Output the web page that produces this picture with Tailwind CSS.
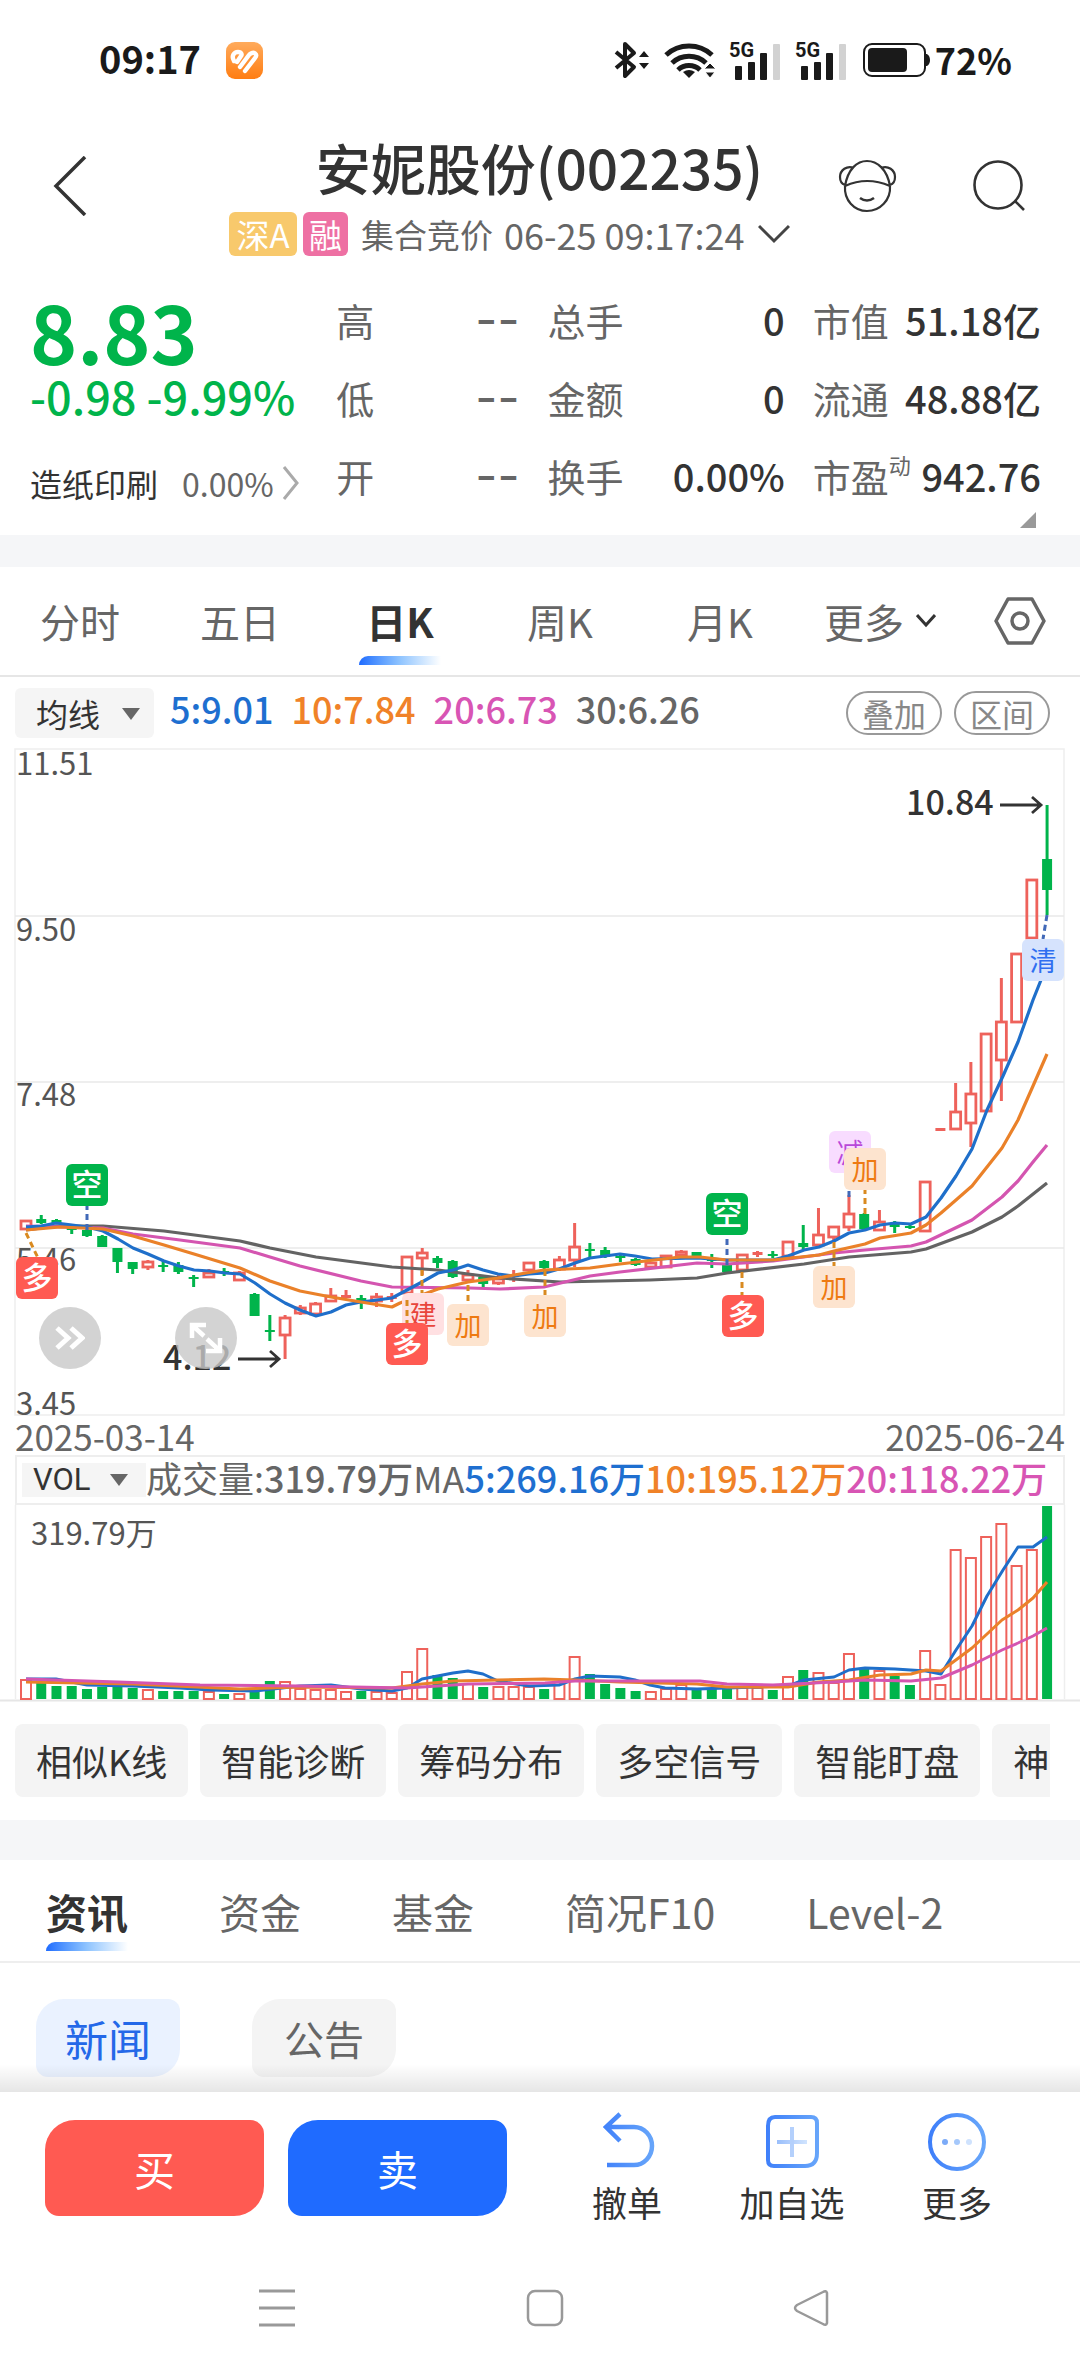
<!DOCTYPE html>
<html lang="zh-CN">
<head>
<meta charset="utf-8">
<meta name="viewport" content="width=device-width, initial-scale=1">
<title>安妮股份(002235)</title>
<script src="https://cdn.jsdelivr.net/npm/@tailwindcss/browser@4"></script>
</head>
<body class="bg-white text-[#333] font-['Noto_Sans_CJK_SC',sans-serif] overflow-x-hidden">

<!-- status bar -->
<div class="flex h-[120px] items-center justify-between pl-[99px] pr-[68px] text-[#1a1a1a]">
  <div class="flex items-center gap-[25px]">
    <span class="pb-1 text-[38px] leading-none font-bold">09:17</span>
    <svg class="h-[37px] w-[37px]" viewBox="0 0 37 37"><defs><linearGradient id="app" x1="0" y1="0" x2="0" y2="1"><stop offset="0" stop-color="#ffab5c"/><stop offset="1" stop-color="#ff7d12"/></linearGradient></defs><rect width="37" height="37" rx="9" fill="url(#app)"/><g fill="none" stroke="#fff" stroke-width="4.4" stroke-linecap="round" stroke-linejoin="round"><path d="M8 19c-3-5 0-9 4-9s4 3 3 4l-4 6M14 25l9-12M19 29l10-13c3-4-1-7-5-4"/></g></svg>
  </div>
  <div class="flex items-center">
    <svg class="h-[38px] w-[36px]" viewBox="0 0 36 38" fill="none" stroke="#1a1a1a" stroke-width="4" stroke-linejoin="round"><path d="M2 11l18 15-9 9V3l9 9L2 27"/><path d="M30 10l5 6H25zM30 28l5-6H25z" fill="#1a1a1a" stroke="none"/></svg>
    <svg class="ml-[14px] h-[38px] w-[52px]" viewBox="0 0 52 38" fill="none" stroke="#1a1a1a" stroke-width="5"><path d="M2 14a34 34 0 0 1 46 0M8 22a25 25 0 0 1 34 0M14 29a16 16 0 0 1 22 0"/><path d="M19 31q6-4 12 0l-6 6z" fill="#1a1a1a" stroke="none"/><path d="M46 22l6 6H40zM46 37l5-6H41z" fill="#1a1a1a" stroke="#fff" stroke-width="1"/></svg>
    <svg class="ml-[13px] h-[44px] w-[52px] pb-[2px]" viewBox="0 -4 52 42" fill="#1a1a1a"><text x="0" y="15" font-size="20" font-weight="700" font-family="Roboto, sans-serif">5G</text><rect x="6" y="24" width="7" height="14" rx="1"/><rect x="19" y="20" width="7" height="18" rx="1"/><rect x="31" y="11" width="7" height="27" rx="1"/><rect x="44" y="2" width="7" height="36" rx="1" fill="#d2d2d2"/></svg>
    <svg class="ml-[14px] h-[44px] w-[52px] pb-[2px]" viewBox="0 -4 52 42" fill="#1a1a1a"><text x="0" y="15" font-size="20" font-weight="700" font-family="Roboto, sans-serif">5G</text><rect x="6" y="24" width="7" height="14" rx="1"/><rect x="19" y="20" width="7" height="18" rx="1"/><rect x="31" y="11" width="7" height="27" rx="1"/><rect x="44" y="2" width="7" height="36" rx="1" fill="#d2d2d2"/></svg>
    <svg class="ml-[16px] h-[34px] w-[67px]" viewBox="0 0 67 34"><rect x="1" y="1" width="61" height="32" rx="8" fill="none" stroke="#1a1a1a" stroke-width="2"/><rect x="5" y="5" width="39" height="24" rx="4" fill="#1a1a1a"/><path d="M62 11h2q3 2 3 6t-3 6h-2z" fill="#1a1a1a"/></svg>
    <span class="ml-[5px] pb-[2px] text-[36px] leading-none font-bold">72%</span>
  </div>
</div>

<!-- title -->
<header class="flex items-start pt-4 pb-[27px]">
  <div class="w-[229px] pl-[50px]">
    <button aria-label="返回" class="flex h-[100px] w-[40px] items-center"><svg class="h-[60px] w-[40px]" viewBox="0 0 40 60" fill="none" stroke="#333" stroke-width="3.5"><path d="M35 1L6 30l29 29"/></svg></button>
  </div>
  <div class="flex-1">
    <h1 class="h-[66px] pl-[60px] text-center text-[55px] leading-[60px] font-medium whitespace-nowrap">安妮股份(002235)</h1>
    <div class="mt-[10px] flex h-[44px] items-center text-[33px] leading-[44px] whitespace-nowrap text-[#666]">
      <span class="h-[44px] w-[68px] rounded-[6px] bg-[#f8c96c] text-center text-white">深A</span>
      <span class="ml-[6px] h-[44px] w-[45px] rounded-[6px] bg-[#ee70a3] text-center text-white">融</span>
      <span class="ml-[13px]">集合竞价</span>
      <span class="ml-[11px] text-[36px]">06-25 09:17:24</span>
      <svg class="ml-auto h-[20px] w-[32px]" viewBox="0 0 32 20" fill="none" stroke="#444" stroke-width="3"><path d="M1 2l15 15L31 2"/></svg>
    </div>
  </div>
  <div class="flex w-[290px] items-center pl-12">
    <button aria-label="助手" class="flex h-[100px] w-[59px] items-center"><svg class="h-[54px] w-[59px]" viewBox="0 0 59 54" fill="none" stroke="#333" stroke-width="2.2"><path d="M7 27C10 10 19 2 29 2s20 8 23 25M7 27q22-10 45 0M7 27c-1 14 9 25 22 25s24-11 23-25M16 9C9 6 2 11 2 18c0 4 2 7 5 8M43 9c7-3 14 2 14 9 0 4-2 7-5 8"/><path d="M22 39q7 5 14 0" stroke-width="2.6"/></svg></button>
    <button aria-label="搜索" class="ml-[76px] flex h-[100px] w-[52px] items-center"><svg class="h-[52px] w-[52px]" viewBox="0 0 52 52" fill="none" stroke="#333" stroke-width="2.6"><circle cx="25" cy="25" r="23.5"/><path d="M42 41l9 9"/></svg></button>
  </div>
</header>

<!-- quote summary -->
<section class="relative grid grid-cols-[278fr_183fr_237fr_228fr] gap-x-7 pr-[39px] pb-5 pl-[30px] text-[38px] leading-[78px] whitespace-nowrap">
  <div class="text-[#00b44b]">
    <div class="text-[80px] leading-[94px] font-bold">8.83</div>
    <div class="text-[45px] leading-[38px] font-medium">-0.98 -9.99%</div>
    <a href="#sector" class="mt-[36px] flex h-[64px] items-center text-[32px] leading-[64px] text-[#333]">造纸印刷<span class="ml-[24px] text-[#666]">0.00%</span><svg class="ml-[8px] h-[34px] w-[18px]" viewBox="0 0 18 34" fill="none" stroke="#aaa" stroke-width="3"><path d="M2 1l13 16L2 33"/></svg></a>
  </div>
  <dl class="-mt-[2px] text-[#666]">
    <div class="flex justify-between"><dt>高</dt><dd class="font-['Inter'] text-[48px]">--</dd></div>
    <div class="flex justify-between"><dt>低</dt><dd class="font-['Inter'] text-[48px]">--</dd></div>
    <div class="flex justify-between"><dt>开</dt><dd class="font-['Inter'] text-[48px]">--</dd></div>
  </dl>
  <dl class="-mt-[2px]">
    <div class="flex justify-between"><dt class="text-[#666]">总手</dt><dd class="font-medium">0</dd></div>
    <div class="flex justify-between"><dt class="text-[#666]">金额</dt><dd class="font-medium">0</dd></div>
    <div class="flex justify-between"><dt class="text-[#666]">换手</dt><dd class="font-medium">0.00%</dd></div>
  </dl>
  <dl class="-mt-[2px]">
    <div class="flex justify-between"><dt class="text-[#666]">市值</dt><dd class="font-medium">51.18亿</dd></div>
    <div class="flex justify-between"><dt class="text-[#666]">流通</dt><dd class="font-medium">48.88亿</dd></div>
    <div class="flex justify-between"><dt class="flex text-[#666]">市盈<span class="text-[22px] leading-[54px]">动</span></dt><dd class="font-medium">942.76</dd></div>
  </dl>
  <svg class="absolute right-[44px] bottom-[7px] h-[16px] w-[16px]" viewBox="0 0 16 16"><path d="M16 0v16H0z" fill="#999"/></svg>
</section>

<div class="h-8 bg-[#f5f6f8]"></div>

<!-- period tabs -->
<nav class="grid h-[110px] grid-cols-[repeat(6,4fr)_3fr] border-b-2 border-[#e6e6e6] text-[40px] leading-[108px] text-[#666]">
  <a href="#m" class="text-center">分时</a>
  <a href="#d5" class="text-center">五日</a>
  <a href="#dk" class="relative text-center font-bold text-[#333]">日K<span class="absolute bottom-[10px] left-[39px] h-[9px] w-[82px] rounded-tl-[9px] bg-linear-to-r from-[#1f6bff] via-[#8fc4ff] to-white"></span></a>
  <a href="#wk" class="text-center">周K</a>
  <a href="#mk" class="text-center">月K</a>
  <button class="flex items-center justify-center gap-3 leading-[108px]">更多<svg class="h-[14px] w-[20px]" viewBox="0 0 20 14" fill="none" stroke="#333" stroke-width="3"><path d="M1 1l9 10 9-10"/></svg></button>
  <button aria-label="设置" class="flex items-center justify-center"><svg class="h-[48px] w-[52px]" viewBox="0 0 52 48" fill="none" stroke="#666" stroke-width="3.5" stroke-linejoin="round"><path d="M14 2h24l12 22-12 22H14L2 24z"/><circle cx="26" cy="24" r="8"/></svg></button>
</nav>

<!-- moving averages -->
<div class="flex h-[71px] items-center pr-[30px] pl-[15px] text-[36px] leading-[44px] font-medium whitespace-nowrap">
  <label class="relative block h-[50px] w-[139px] rounded-[6px] bg-[#f5f5f5] text-[32px]">
    <select aria-label="指标" class="block h-[50px] w-full appearance-none bg-transparent pl-[21px] leading-[50px] font-normal text-[#333]"><option>均线</option></select>
    <svg class="absolute top-[20px] right-[14px] h-[12px] w-[18px]" viewBox="0 0 18 12"><path d="M0 0h18L9 12z" fill="#666"/></svg>
  </label>
  <div class="flex gap-[18px] pb-[10px] pl-[16px]">
    <span class="text-[#1e6fd0]">5:9.01</span>
    <span class="text-[#f08228]">10:7.84</span>
    <span class="text-[#d855b4]">20:6.73</span>
    <span class="text-[#666]">30:6.26</span>
  </div>
  <button class="ml-auto h-[44px] w-[96px] rounded-full border-2 border-[#999] text-[32px] leading-[40px] font-normal text-[#888]">叠加</button>
  <button class="ml-[12px] h-[44px] w-[96px] rounded-full border-2 border-[#999] text-[32px] leading-[40px] font-normal text-[#888]">区间</button>
</div>

<!-- candlestick chart -->
<div class="relative">
  <svg id="price" class="block h-auto w-full overflow-visible" viewBox="0 748 1080 669"></svg>
  <button aria-label="展开" class="absolute bottom-[48px] left-[3.6%] flex h-[62px] w-[62px] items-center justify-center rounded-full bg-[#c8c8c8]/80"><svg class="h-[24px] w-[30px]" viewBox="0 0 30 24" fill="none" stroke="#fff" stroke-width="5"><path d="M2 2l11 10L2 22M16 2l11 10-11 10"/></svg></button>
  <button aria-label="全屏" class="absolute bottom-[48px] left-[16.2%] flex h-[62px] w-[62px] items-center justify-center rounded-full bg-[#c8c8c8]/80"><svg class="h-[32px] w-[34px]" viewBox="0 0 34 32" fill="none" stroke="#fff" stroke-width="4.5"><path d="M3 16V3h14M4 4l11 10M31 16v13H17M30 28L18 17"/></svg></button>
</div>
<div class="mx-[15px] flex h-[40px] justify-between border-b-2 border-[#eee] text-[35px] leading-[38px] text-[#666]"><span>2025-03-14</span><span>2025-06-24</span></div>

<!-- volume -->
<div class="mx-[15px] flex h-[48px] items-center border-x-2 border-b-2 border-[#eee] pl-[5px] text-[36px] leading-[40px] whitespace-nowrap text-[#666]">
  <label class="relative block h-[34px] w-[124px] shrink-0 bg-[#f5f5f5] font-['Roboto'] text-[31px]">
    <select aria-label="副图指标" class="block h-[34px] w-full appearance-none bg-transparent pl-[11px] leading-[34px] text-[#333]"><option>VOL</option></select>
    <svg class="absolute top-[11px] right-[18px] h-[12px] w-[18px]" viewBox="0 0 18 12"><path d="M0 0h18L9 12z" fill="#666"/></svg>
  </label>
  <div class="flex pb-[6px] font-medium"><span class="font-normal">成交量:</span><span>319.79万</span><span class="font-normal">MA</span><span class="text-[#1e6fd0]">5:269.16万</span><span class="text-[#f08228]">10:195.12万</span><span class="text-[#d855b4]">20:118.22万</span></div>
</div>
<svg id="volume" class="block h-auto w-full" viewBox="0 1505 1080 197"></svg>

<!-- tool chips -->
<div class="mr-[30px] ml-[15px] flex gap-[12px] overflow-hidden pt-[22px] pb-[23px] text-[36px] leading-[73px] whitespace-nowrap">
  <button class="shrink-0 rounded-[8px] bg-[#f4f4f4] px-[21px]">相似K线</button>
  <button class="shrink-0 rounded-[8px] bg-[#f4f4f4] px-[21px]">智能诊断</button>
  <button class="shrink-0 rounded-[8px] bg-[#f4f4f4] px-[21px]">筹码分布</button>
  <button class="shrink-0 rounded-[8px] bg-[#f4f4f4] px-[21px]">多空信号</button>
  <button class="shrink-0 rounded-[8px] bg-[#f4f4f4] px-[21px]">智能盯盘</button>
  <button class="shrink-0 rounded-[8px] bg-[#f4f4f4] px-[21px]">神</button>
</div>

<div class="h-10 bg-[#f5f6f8]"></div>

<!-- content tabs -->
<nav class="flex h-[103px] gap-[91px] border-b-2 border-[#eee] pl-[46px] text-[41px] leading-[102px] whitespace-nowrap text-[#666]">
  <a href="#news" class="relative font-bold text-[#333]">资讯<span class="absolute bottom-[10px] left-0 h-[9px] w-[82px] rounded-tl-[9px] bg-linear-to-r from-[#1f6bff] via-[#8fc4ff] to-white"></span></a>
  <a href="#money">资金</a>
  <a href="#fund">基金</a>
  <a href="#f10">简况F10</a>
  <a href="#l2">Level-2</a>
</nav>
<div class="relative flex h-[129px] gap-[72px] pt-[36px] pl-[36px] text-[43px] leading-[76px]">
  <button class="h-[78px] w-[144px] rounded-[12px] rounded-tl-[28px] rounded-br-[28px] bg-[#eaf2ff] text-[#2468e8]">新闻</button>
  <button class="h-[78px] w-[144px] rounded-[12px] rounded-tl-[28px] rounded-br-[28px] bg-[#f4f4f4] text-[40px] text-[#666]">公告</button>
  <div class="pointer-events-none absolute inset-x-0 bottom-0 h-[28px] bg-linear-to-b from-black/0 to-black/10"></div>
</div>

<!-- trade bar -->
<footer class="flex items-start gap-[24px] pt-[28px] pl-[45px] text-[35px] leading-[48px]">
  <button class="h-[96px] w-[219px] rounded-[14px] rounded-tl-[30px] rounded-br-[30px] bg-[#ff5a52] text-[41px] text-white">买</button>
  <button class="h-[96px] w-[219px] rounded-[14px] rounded-tl-[30px] rounded-br-[30px] bg-[#1f6bff] text-[41px] text-white">卖</button>
  <div class="-mt-2 flex flex-1 justify-between pr-[87px] pl-[60px]">
    <button class="flex w-[72px] flex-col items-center gap-[6px]">
      <svg class="h-[60px] w-[60px]" viewBox="0 0 60 60" fill="none" stroke="url(#ic)" stroke-width="4.5"><defs><linearGradient id="ic" gradientUnits="userSpaceOnUse" x1="0" y1="0" x2="60" y2="0"><stop offset="0" stop-color="#3c7dfa"/><stop offset="1" stop-color="#6aa8fa"/></linearGradient><linearGradient id="pale" gradientUnits="userSpaceOnUse" x1="14" y1="0" x2="46" y2="0"><stop offset="0" stop-color="#98bdfb"/><stop offset="1" stop-color="#d2e5fe"/></linearGradient></defs><path d="M23 2L9 15l14 14M9 15h28a18 19 0 0 1 0 38H10"/></svg>撤单</button>
    <button class="flex w-[108px] flex-col items-center gap-[6px]">
      <svg class="h-[60px] w-[60px]" viewBox="0 0 60 60" fill="none" stroke="url(#ic)" stroke-width="4"><path d="M13 5h36q6 0 6 6v30q0 13-12 13H12q-6 0-6-6V14q0-9 7-9z"/><rect x="15" y="28" width="30" height="4" fill="url(#pale)" stroke="none"/><rect x="28" y="15" width="4" height="30" fill="#b4d0fc" stroke="none"/></svg>加自选</button>
    <button class="flex w-[72px] flex-col items-center gap-[6px]">
      <svg class="h-[60px] w-[60px]" viewBox="0 0 60 60"><circle cx="30" cy="30" r="27" fill="none" stroke="url(#ic)" stroke-width="4"/><circle cx="18" cy="30" r="3" fill="#7cabf8"/><circle cx="30" cy="30" r="3" fill="#a5c8fb"/><circle cx="42" cy="30" r="3" fill="#cfe2fd"/></svg>更多</button>
  </div>
</footer>

<!-- system navigation -->
<div class="flex justify-between pt-[63px] pr-[251px] pb-[48px] pl-[258px]">
  <button aria-label="最近任务"><svg class="h-[38px] w-[38px]" viewBox="0 0 38 38" stroke="#999" stroke-width="3"><path d="M1 2h36M1 19h36M1 36h36"/></svg></button>
  <button aria-label="主屏幕"><svg class="h-[38px] w-[38px]" viewBox="0 0 38 38" fill="none" stroke="#999" stroke-width="2.5"><rect x="2" y="2" width="34" height="34" rx="7"/></svg></button>
  <button aria-label="后退"><svg class="h-[38px] w-[36px]" viewBox="0 0 36 38" fill="none" stroke="#999" stroke-width="2.5" stroke-linejoin="round"><path d="M34 4v30q-1 3-4 1L4 22q-4-3 0-6L30 3q3-2 4 1z"/></svg></button>
</div>

<script>
const RED = '#ee625b', GREEN = '#00b44b', LINE = {blue:'#1f6fca', orange:'#ea8129', pink:'#d455b0', gray:'#636363'};
const STEP = 15.24, X0 = 26;
// kind, body top, body bottom, high, low, volume top
const days = [
['r',1221,1229,1221,1229,1680],['g',1219,1223,1215,1224,1683],['g',1220,1223,1219,1224,1686],['g',1228,1230,1226,1234,1686],['g',1230,1236,1228,1237,1689],
['g',1236,1247,1235,1247,1687],['g',1248,1262,1248,1273,1687],['g',1262,1269,1262,1274,1688],['r',1262,1267,1260,1270,1690],['g',1265,1267,1260,1272,1691],
['g',1265,1272,1262,1274,1691],['g',1277,1279,1275,1287,1691],['r',1273,1277,1269,1277,1692],['g',1271,1273,1268,1276,1694],['r',1273,1280,1271,1280,1694],
['g',1294,1316,1293,1316,1692],['g',1330,1332,1315,1341,1681],['r',1318,1335,1315,1359,1682],['r',1308,1313,1305,1315,1689],['r',1304,1314,1302,1315,1690],
['r',1296,1301,1288,1301,1690],['r',1296,1297,1290,1298,1692],['g',1298,1302,1295,1309,1691],['r',1297,1301,1293,1307,1692],['r',1297,1298,1293,1302,1693],
['r',1257,1293,1256,1293,1672],['r',1253,1258,1248,1275,1649],['g',1258,1263,1256,1268,1675],['g',1261,1277,1260,1278,1678],['r',1275,1280,1270,1280,1684],
['g',1277,1284,1276,1287,1687],['r',1279,1283,1275,1285,1687],['r',1275,1276,1270,1282,1687],['r',1263,1270,1262,1271,1687],['g',1261,1268,1260,1272,1689],
['r',1260,1269,1256,1271,1682],['r',1247,1260,1223,1267,1657],['g',1249,1251,1243,1257,1674],['g',1250,1257,1247,1258,1684],['g',1256,1258,1255,1262,1688],
['g',1259,1265,1258,1266,1691],['r',1263,1267,1262,1268,1692],['r',1256,1267,1255,1268,1689],['r',1252,1255,1250,1256,1685],['g',1252,1256,1252,1258,1689],
['g',1258,1261,1254,1268,1689],['g',1265,1272,1263,1272,1689],['r',1255,1270,1254,1271,1688],['r',1253,1254,1251,1257,1688],['g',1254,1256,1251,1258,1690],
['r',1242,1256,1241,1257,1677],['g',1243,1247,1225,1249,1670],['r',1235,1245,1208,1246,1673],['r',1227,1237,1226,1240,1683],['r',1214,1227,1195,1231,1654],
['g',1214,1229,1213,1230,1669],['r',1222,1230,1210,1230,1671],['g',1223,1227,1221,1233,1676],['g',1226,1228,1225,1229,1685],['r',1182,1231,1181,1231,1651],
['r',1129,1130,1129,1130,1685],['r',1112,1129,1083,1130,1550],['r',1094,1123,1062,1147,1558],['r',1034,1111,1033,1112,1537],['r',1022,1060,978,1101,1524],
['r',954,1022,953,1022,1566],['r',880,938,879,938,1550],['g',859,890,805,915,1506]];
const priceMA = {
gray:'26,1230 57,1226 103,1226 164,1231 240,1241 270,1248 316,1257 392,1267 438,1270 468,1274 500,1278 560,1282 650,1280 697,1278 727,1273 804,1264 849,1257 911,1252 926,1249 972,1232 1002,1217 1018,1206 1047,1183',
pink:'26,1226 103,1228 133,1234 180,1240 240,1248 270,1257 300,1266 361,1281 392,1287 470,1288 500,1289 544,1287 590,1276 620,1272 697,1263 727,1264 773,1261 834,1253 865,1250 911,1246 926,1242 972,1220 1002,1197 1018,1181 1033,1162 1047,1145',
blue:'26,1227 41,1226 56,1223 72,1225 87,1227 103,1231 118,1239 133,1248 148,1254 164,1261 179,1266 194,1270 210,1271 225,1273 240,1274 255,1283 270,1294 285,1303 300,1310 316,1316 331,1312 346,1305 361,1302 377,1300 392,1298 407,1290 422,1282 438,1273 453,1270 468,1265 483,1270 498,1274 514,1276 529,1274 545,1273 559,1269 575,1263 590,1258 620,1254 635,1256 652,1259 697,1258 727,1260 773,1260 788,1256 804,1250 819,1247 834,1241 849,1233 865,1230 880,1225 895,1223 911,1224 926,1217 941,1198 956,1176 972,1149 987,1110 1003,1076 1018,1042 1033,1000 1047,965',
orange:'26,1230 60,1227 103,1229 133,1236 164,1245 194,1254 240,1268 270,1281 300,1291 331,1297 361,1302 392,1307 400,1303 438,1289 468,1282 498,1278 514,1275 544,1270 590,1268 620,1264 680,1257 700,1257 727,1260 773,1260 819,1255 834,1251 865,1244 880,1238 911,1233 926,1225 941,1213 956,1200 972,1186 1002,1148 1018,1120 1033,1086 1047,1054'};
const volMA = {
blue:'26,1679 56,1679 87,1685 133,1686 180,1688 210,1690 255,1691 300,1686 331,1685 361,1689 392,1691 407,1688 422,1679 453,1673 468,1671 483,1674 498,1681 529,1686 559,1685 575,1679 590,1676 620,1677 635,1680 650,1685 665,1688 697,1689 727,1688 788,1686 804,1680 834,1677 849,1670 865,1668 895,1669 926,1671 941,1674 956,1650 972,1626 987,1596 1003,1570 1018,1547 1033,1547 1047,1537',
orange:'26,1682 133,1684 240,1689 300,1687 392,1688 422,1684 453,1681 544,1679 575,1680 620,1682 697,1684 727,1687 788,1687 819,1682 849,1680 880,1675 911,1674 926,1670 941,1671 972,1648 1002,1620 1018,1610 1033,1598 1047,1582',
pink:'26,1679 118,1682 200,1685 300,1686 407,1688 468,1684 545,1683 575,1681 700,1681 727,1684 773,1685 834,1682 865,1680 911,1681 941,1678 972,1665 1002,1650 1018,1643 1033,1636 1047,1628'};
// label, badge x, badge y, text colour, fill, link from x,y to x,y, link colour
const B = '#4169b8', O = '#d98a20';
const marks = [
['空',66,1164,'#fff','#00b44b',87,1230,87,1206,B],['多',16,1257,'#fff','#ff5a52',26,1233,38,1258,O],
['建',402,1293,'#e8453c','#ffe0e2',422,1270,422,1293,O],['多',386,1323,'#fff','#ff5a52',407,1300,407,1323,O],
['加',447,1304,'#ee7a12','#fde4cf',468,1285,468,1304,O],['加',524,1295,'#ee7a12','#fde4cf',545,1270,545,1295,O],
['空',706,1193,'#fff','#00b44b',727,1265,727,1235,B],['多',722,1295,'#fff','#ff5a52',742,1272,742,1295,O],
['减',829,1131,'#b848d8','#f8dcff',849,1197,849,1172,B],['加',844,1148,'#ee7a12','#fde4cf',865,1214,865,1190,O],
['加',813,1266,'#ee7a12','#fde4cf',834,1242,834,1266,O],['清',1022,939,'#2f6ff0','#d6e3fd',1047,915,1043,939,B]];

const lines = (o, w) => Object.entries(o).map(([c,p]) => `<polyline points="${p}" fill="none" stroke="${LINE[c]}" stroke-width="${w}" stroke-linejoin="round"/>`).join('');
let s = '<rect x="15" y="749" width="1049" height="666" fill="none" stroke="#eee" stroke-width="1.5"/>';
for (const y of [916,1082,1248]) s += `<path d="M15 ${y}H1064" stroke="#e8e8e8" stroke-width="1.5"/>`;
for (const [t,y] of [['11.51',775],['9.50',941],['7.48',1106],['5.46',1271],['3.45',1415]]) s += `<text x="16" y="${y}" font-size="31" fill="#555">${t}</text>`;
let v = '<path d="M15.5 1505V1699M1064.5 1505V1699" stroke="#eee" stroke-width="1.5"/><path d="M0 1700.5H1080" stroke="#e6e6e6" stroke-width="2"/><text x="31" y="1545" font-size="31" fill="#555">319.79万</text>';
days.forEach(([k,t,b,h,l,vt], i) => {
  const x = X0 + STEP * i;
  if (k === 'g') {
    s += `<path d="M${x} ${h}V${l}" stroke="${GREEN}" stroke-width="3"/><rect x="${x-5}" y="${t}" width="10" height="${b-t}" fill="${GREEN}"/>`;
    v += `<rect x="${x-5}" y="${vt}" width="10" height="${1699-vt}" fill="${GREEN}"/>`;
  } else {
    s += `<path d="M${x} ${h}V${t}M${x} ${b}V${l}" stroke="${RED}" stroke-width="3"/>`;
    s += b - t < 2 ? `<rect x="${x-5}" y="${t-1}" width="10" height="3" fill="${RED}"/>` : `<rect x="${x-5}" y="${t}" width="10" height="${b-t}" fill="none" stroke="${RED}" stroke-width="2.8"/>`;
    v += `<rect x="${x-5}" y="${vt}" width="10" height="${1699-vt}" fill="#fff" stroke="${RED}" stroke-width="2"/>`;
  }
});
s += lines(priceMA, 3.2);
v += lines(volMA, 3);
for (const [t,x,y,c,f,x1,y1,x2,y2,lc] of [...marks.filter(m => m[0] === '建' || m[0] === '减'), ...marks.filter(m => m[0] !== '建' && m[0] !== '减')])
  s += `<path d="M${x1} ${y1}L${x2} ${y2}" stroke="${lc}" stroke-width="3" stroke-dasharray="6 4"/><rect x="${x}" y="${y}" width="42" height="42" rx="6" fill="${f}"/><text x="${x+21}" y="${y+32}" font-size="${c==='#fff'?31:27}" font-weight="${c==='#fff'?500:400}" text-anchor="middle" fill="${c}">${t}</text>`;
s += '<g font-size="34" font-weight="500" fill="#333"><text x="163" y="1370">4.12</text><text x="906" y="815">10.84</text></g><path d="M238 1359h41M270 1351l9 8-9 8M1000 805h41M1032 797l9 8-9 8" fill="none" stroke="#333" stroke-width="2.8"/>';
document.getElementById('price').innerHTML = s;
document.getElementById('volume').innerHTML = v;
</script>
</body>
</html>
